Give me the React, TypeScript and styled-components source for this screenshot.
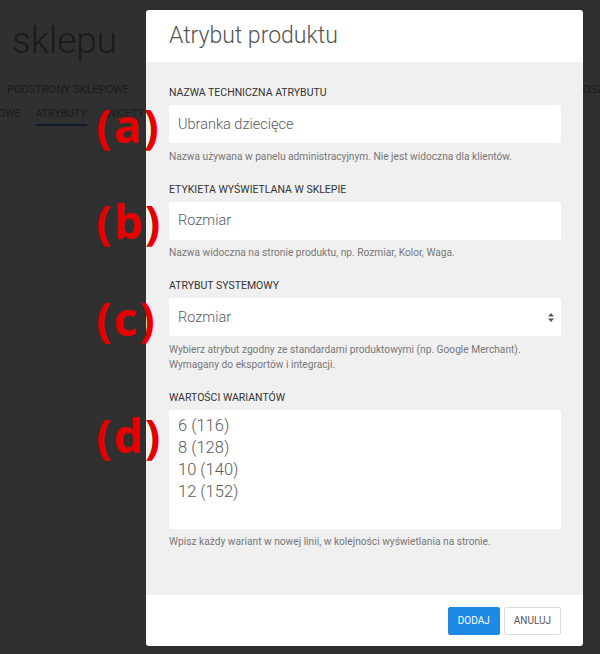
import styled, { createGlobalStyle } from "styled-components";

const GlobalStyle = createGlobalStyle`
  html, body {
    margin: 0;
    padding: 0;
    background: #ffffff;
    font-family: Roboto, "Liberation Sans", Arial, sans-serif;
  }
  * { box-sizing: border-box; }
`;

const Page = styled.div`
  position: relative;
  width: 600px;
  height: 654px;
  overflow: hidden;
  background: #ffffff;
  color: #8c8c8c;
`;

const ShopTitle = styled.h1`
  margin: 0;
  padding: 19px 0 0 12px;
  font-size: 37px;
  font-weight: 300;
  line-height: 44px;
`;

const NavRow = styled.div`
  display: flex;
  justify-content: space-between;
  padding: 20px 0 0 7px;
  font-size: 11px;
  text-transform: uppercase;
`;

const NavEnd = styled.span`
  margin-right: -17px;
`;

const SubNav = styled.div`
  display: flex;
  gap: 15px;
  margin-top: 11px;
  margin-left: -2px;
  font-size: 10.5px;
  text-transform: uppercase;
`;

const SubNavItem = styled.span<{ $active?: boolean }>`
  padding-bottom: 4px;
  border-bottom: 2px solid ${(p) => (p.$active ? "#4a8ee6" : "transparent")};
`;

const Overlay = styled.div`
  position: absolute;
  inset: 0;
  background: rgba(0, 0, 0, 0.81);
`;

const Modal = styled.div`
  position: absolute;
  left: 146px;
  top: 10px;
  width: 437px;
  height: 636px;
  display: flex;
  flex-direction: column;
  background: #ffffff;
  border-radius: 3px;
  overflow: hidden;
`;

const Header = styled.div`
  height: 52px;
  padding: 0 23px 2px;
  display: flex;
  align-items: center;
`;

const Title = styled.h2`
  margin: 0;
  font-size: 23px;
  font-weight: 300;
  color: #555555;
`;

const Body = styled.div`
  flex: 1;
  background: #f0f0f0;
  padding: 24px 22px 0 23px;
`;

const Field = styled.div`
  margin-bottom: 19px;
`;

const Label = styled.div`
  font-size: 10.5px;
  line-height: 13px;
  color: #333333;
  text-transform: uppercase;
  margin-bottom: 6px;
`;

const Input = styled.input`
  display: block;
  width: 100%;
  height: 38px;
  border: none;
  border-radius: 2px;
  background: #ffffff;
  padding: 0 9px;
  font-family: inherit;
  font-size: 14.5px;
  font-weight: 300;
  color: #5a5a5a;
  outline: none;
`;

const SelectWrap = styled.div`
  position: relative;
`;

const Select = styled.select`
  display: block;
  width: 100%;
  height: 38px;
  border: none;
  border-radius: 2px;
  background: #ffffff;
  padding: 0 9px;
  font-family: inherit;
  font-size: 14.5px;
  font-weight: 300;
  color: #5a5a5a;
  appearance: none;
  outline: none;
`;

const Arrows = styled.svg`
  position: absolute;
  right: 7px;
  top: 15px;
  pointer-events: none;
`;

const TextArea = styled.textarea`
  display: block;
  width: 100%;
  height: 119px;
  border: none;
  border-radius: 2px;
  background: #ffffff;
  padding: 5px 9px;
  font-family: inherit;
  font-size: 16.5px;
  font-weight: 300;
  line-height: 22px;
  color: #5a5a5a;
  resize: none;
  outline: none;
`;

const Help = styled.div`
  margin-top: 5.5px;
  font-size: 10.2px;
  line-height: 15px;
  color: #777777;
`;

const Footer = styled.div`
  height: 51px;
  display: flex;
  justify-content: flex-end;
  align-items: center;
  gap: 4px;
  padding: 0 22px;
`;

const Button = styled.button<{ $primary?: boolean }>`
  height: 28px;
  padding: 0 9px;
  border-radius: 2px;
  border: 1px solid ${(p) => (p.$primary ? "#1e88e5" : "#dddddd")};
  background: ${(p) => (p.$primary ? "#1e88e5" : "#ffffff")};
  color: ${(p) => (p.$primary ? "#ffffff" : "#555555")};
  font-family: inherit;
  font-size: 10px;
  text-transform: uppercase;
`;

const Marker = styled.div<{ $top: number }>`
  position: absolute;
  left: 96px;
  top: ${(p) => p.$top}px;
  font-family: "Open Sans", "DejaVu Sans", sans-serif;
  font-weight: 700;
  font-size: 46px;
  letter-spacing: 2px;
  line-height: 50px;
  color: #e50000;
`;

const fields = [
  { label: "Nazwa techniczna atrybutu", value: "Ubranka dziecięce", help: "Nazwa używana w panelu administracyjnym. Nie jest widoczna dla klientów." },
  { label: "Etykieta wyświetlana w sklepie", value: "Rozmiar", help: "Nazwa widoczna na stronie produktu, np. Rozmiar, Kolor, Waga." },
];

export default function App() {
  return (
    <Page>
      <GlobalStyle />
      <ShopTitle>sklepu</ShopTitle>
      <NavRow>
        <span>Podstrony sklepowe</span>
        <NavEnd>Koszyk</NavEnd>
      </NavRow>
      <SubNav>
        <SubNavItem>owe</SubNavItem>
        <SubNavItem $active>Atrybuty</SubNavItem>
        <SubNavItem>Ankiety</SubNavItem>
      </SubNav>
      <Overlay />
      <Modal>
        <Header>
          <Title>Atrybut produktu</Title>
        </Header>
        <Body>
          {fields.map((f) => (
            <Field key={f.label}>
              <Label>{f.label}</Label>
              <Input defaultValue={f.value} />
              <Help>{f.help}</Help>
            </Field>
          ))}
          <Field>
            <Label>Atrybut systemowy</Label>
            <SelectWrap>
              <Select defaultValue="Rozmiar">
                <option>Rozmiar</option>
                <option>Kolor</option>
              </Select>
              <Arrows width="6" height="9" viewBox="0 0 6 9">
                <path d="M3 0 L6 3.5 H0 Z M3 9 L6 5.5 H0 Z" fill="#555" />
              </Arrows>
            </SelectWrap>
            <Help>
              Wybierz atrybut zgodny ze standardami produktowymi (np. Google Merchant).
              <br />
              Wymagany do eksportów i integracji.
            </Help>
          </Field>
          <Field>
            <Label>Wartości wariantów</Label>
            <TextArea defaultValue={"6 (116)\n8 (128)\n10 (140)\n12 (152)"} />
            <Help>Wpisz każdy wariant w nowej linii, w kolejności wyświetlania na stronie.</Help>
          </Field>
        </Body>
        <Footer>
          <Button $primary>Dodaj</Button>
          <Button>Anuluj</Button>
        </Footer>
      </Modal>
      <Marker $top={100}>(a)</Marker>
      <Marker $top={196}>(b)</Marker>
      <Marker $top={293}>(c)</Marker>
      <Marker $top={410}>(d)</Marker>
    </Page>
  );
}
